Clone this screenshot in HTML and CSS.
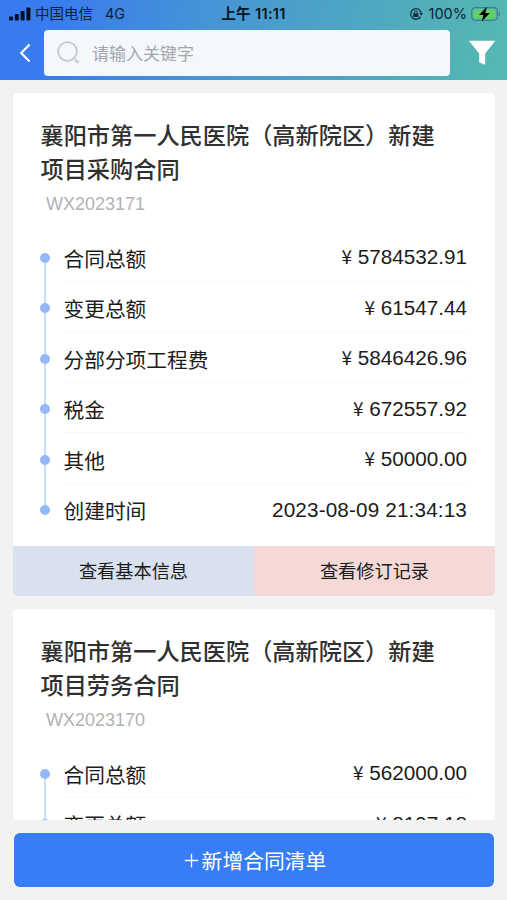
FILE: index.html
```html
<!DOCTYPE html>
<html lang="zh-CN">
<head>
  <meta charset="UTF-8">
  <meta name="viewport" content="width=device-width, initial-scale=1.0">
  <title>合同清单</title>
  <link rel="stylesheet" href="styles.css">
</head>
<body>

  <header class="header">
    <div class="status-bar">
      <div class="status-left">
        <svg class="signal" width="22" height="14" viewBox="0 0 22 14">
          <rect x="0" y="9.5" width="4" height="4" rx="1"/>
          <rect x="5.8" y="7" width="4" height="6.5" rx="1"/>
          <rect x="11.6" y="4" width="4" height="9.5" rx="1"/>
          <rect x="17.4" y="0.5" width="4" height="13" rx="1"/>
        </svg>
        <span class="carrier">中国电信</span>
        <span class="network">4G</span>
      </div>
      <div class="clock">上午 11:11</div>
      <div class="status-right">
        <svg class="lock" width="14" height="14" viewBox="0 0 14 14">
          <path d="M12 5.2A5.3 5.3 0 1 0 11.6 9.6" fill="none" stroke="#14303c" stroke-width="1.3"/>
          <path d="M10.2 5.8h3.8L12.2 8.8z" fill="#14303c"/>
          <rect x="4.2" y="6.3" width="5.2" height="3.7" rx="0.6" fill="#14303c"/>
          <path d="M5.3 6.5V5.3a1.5 1.5 0 0 1 3 0v1.2" fill="none" stroke="#14303c" stroke-width="1"/>
        </svg>
        <span class="percent">100%</span>
        <svg class="battery" width="30" height="16" viewBox="0 0 30 16">
          <rect x="0.7" y="1.7" width="25.6" height="12.6" rx="3.5" fill="none" stroke="#3f7f86" stroke-width="1.2"/>
          <rect x="2.4" y="3.4" width="22.2" height="9.2" rx="2" fill="#65d067"/>
          <path d="M27.6 5.6c2 .8 2 4 0 4.8z" fill="#3f7f86"/>
          <path d="M15.8 0.8L8 9h4.4l-1.6 6.4L18.8 7h-4.4z" fill="#000"/>
        </svg>
      </div>
    </div>

    <div class="nav">
      <svg class="back" width="12" height="20" viewBox="0 0 12 20">
        <path d="M10.6 1.5L2.2 10l8.4 8.5" fill="none" stroke="#fff" stroke-width="2.2"/>
      </svg>
      <div class="search">
        <svg width="24" height="24" viewBox="0 0 24 24">
          <circle cx="10.5" cy="10.5" r="9.4" fill="none" stroke="#c6c9cc" stroke-width="1.9"/>
          <path d="M18 18.6l3.4 3.2" stroke="#c6c9cc" stroke-width="2.4"/>
        </svg>
        <span>请输入关键字</span>
      </div>
      <svg class="filter" width="28" height="26" viewBox="0 0 28 26">
        <path d="M0.8 0.8H27.2L17.2 13.6V24.8L11.2 22.4V13.6z" fill="#fff"/>
      </svg>
    </div>
  </header>

  <main class="list">
    <section class="card">
      <h2>襄阳市第一人民医院（高新院区）新建项目采购合同</h2>
      <p class="code">WX2023171</p>
      <ul class="rows">
        <li><span class="label">合同总额</span><span class="value"><i>¥</i> 5784532.91</span></li>
        <li><span class="label">变更总额</span><span class="value"><i>¥</i> 61547.44</span></li>
        <li><span class="label">分部分项工程费</span><span class="value"><i>¥</i> 5846426.96</span></li>
        <li><span class="label">税金</span><span class="value"><i>¥</i> 672557.92</span></li>
        <li><span class="label">其他</span><span class="value"><i>¥</i> 50000.00</span></li>
        <li><span class="label">创建时间</span><span class="value date">2023-08-09 21:34:13</span></li>
      </ul>
      <div class="actions">
        <div class="action info">查看基本信息</div>
        <div class="action record">查看修订记录</div>
      </div>
    </section>

    <section class="card">
      <h2>襄阳市第一人民医院（高新院区）新建项目劳务合同</h2>
      <p class="code">WX2023170</p>
      <ul class="rows">
        <li><span class="label">合同总额</span><span class="value"><i>¥</i> 562000.00</span></li>
        <li><span class="label">变更总额</span><span class="value"><i>¥</i> 8197.18</span></li>
      </ul>
    </section>
  </main>

  <footer class="footer">
    <div class="add">
      <svg width="15" height="15" viewBox="0 0 15 15">
        <path d="M7.5 0.8v13.4M0.8 7.5h13.4" stroke="#fff" stroke-width="1.3"/>
      </svg>
      <span>新增合同清单</span>
    </div>
  </footer>

</body>
</html>
```
FILE: styles.css
```css
* {
  box-sizing: border-box;
}

body {
  margin: 0;
  height: 900px;
  display: flex;
  flex-direction: column;
  overflow: hidden;
  background: #f2f2f2;
  font-family: "Liberation Sans", "Noto Sans CJK SC", sans-serif;
  color: #1c1c1c;
}

/* Header */
.header {
  flex: none;
  height: 80px;
  background: linear-gradient(100deg, #387af0 8%, #4a9bce 50%, #55b6b2 96%);
}

.status-bar {
  height: 28px;
  display: grid;
  grid-template-columns: 1fr auto 1fr;
  align-items: center;
  padding: 0 6px 0 9px;
  font-family: Inter, "Noto Sans CJK SC", sans-serif;
  font-size: 14.5px;
  line-height: 28px;
  color: #0d2238;
}

.status-left,
.status-right {
  display: flex;
  align-items: center;
}

.signal {
  fill: #04101f;
}

.carrier {
  margin-left: 4px;
}

.network {
  margin-left: 12px;
}

.clock {
  padding-right: 3px;
  font-weight: 600;
  font-size: 14.6px;
  letter-spacing: 0.3px;
  color: #06151f;
}

.status-right {
  justify-content: flex-end;
}

.percent {
  margin: 0 4px 0 6px;
}

.nav {
  display: flex;
  align-items: center;
  height: 50px;
  padding: 0 12px 0 19px;
}

.search {
  flex: none;
  display: flex;
  align-items: center;
  width: 406px;
  height: 46px;
  margin: 0 18px 0 13px;
  padding-left: 13px;
  border-radius: 4px;
  background: #f4f8fc;
  color: #a3a6aa;
  font-size: 17px;
}

.search span {
  margin: 0 0 2px 11px;
}

.back,
.filter {
  flex: none;
}

/* Contract cards */
.list {
  height: 739.5px;
  flex: none;
  overflow: hidden;
  padding: 13px 12px 0 13px;
}

.card {
  margin-bottom: 13px;
  padding-top: 25.5px;
  height: 503px;
  display: flex;
  flex-direction: column;
  border-radius: 5px;
  overflow: hidden;
  background: #fff;
}

.card h2 {
  margin: 0;
  padding: 0 58px 0 27.5px;
  font-size: 23.2px;
  line-height: 34.4px;
  font-weight: 500;
  color: #303030;
}

.code {
  margin: 6px 0 16px 33px;
  font-size: 18px;
  line-height: 22px;
  color: #b2b2b2;
}

.rows {
  list-style: none;
  margin: 0;
  padding: 0 28px 0 27px;
}

.rows li {
  position: relative;
  display: flex;
  justify-content: space-between;
  height: 50.5px;
  padding-left: 23.5px;
  line-height: 50px;
  font-size: 20.7px;
}

.rows li + li::after {
  content: "";
  position: absolute;
  left: 24px;
  right: 0;
  top: -1px;
  height: 1px;
  background: #f9f9f9;
}

.label {
  padding-top: 3.5px;
}

/* dot and the line down to the next one */
.rows li::before {
  content: "";
  position: absolute;
  z-index: 1;
  left: 0;
  top: 21.5px;
  width: 10px;
  height: 10px;
  border-radius: 50%;
  background: #94b8f8;
}

.rows li:not(:last-child) .label::before {
  content: "";
  position: absolute;
  left: 4px;
  top: 28px;
  width: 2px;
  height: 50px;
  background: #c4dffb;
}

.value i {
  font-family: "Noto Sans CJK SC", sans-serif;
  font-style: normal;
  font-size: 19px;
}

.date {
  padding-top: 1px;
  letter-spacing: 0.15px;
}

.actions {
  display: flex;
  margin-top: auto;
  height: 50px;
}

.action {
  flex: 1;
  text-align: center;
  line-height: 52px;
  font-size: 18.2px;
}

.info {
  background: #d9e1ee;
}

.record {
  background: #f4d9d7;
}

/* Bottom button */
.footer {
  padding: 13.5px 13px 0 14px;
}

.add {
  display: flex;
  align-items: center;
  justify-content: center;
  gap: 3px;
  height: 54px;
  padding-left: 2px;
  border-radius: 6px;
  background: #367df6;
  color: #fff;
  font-size: 20.8px;
}
```
